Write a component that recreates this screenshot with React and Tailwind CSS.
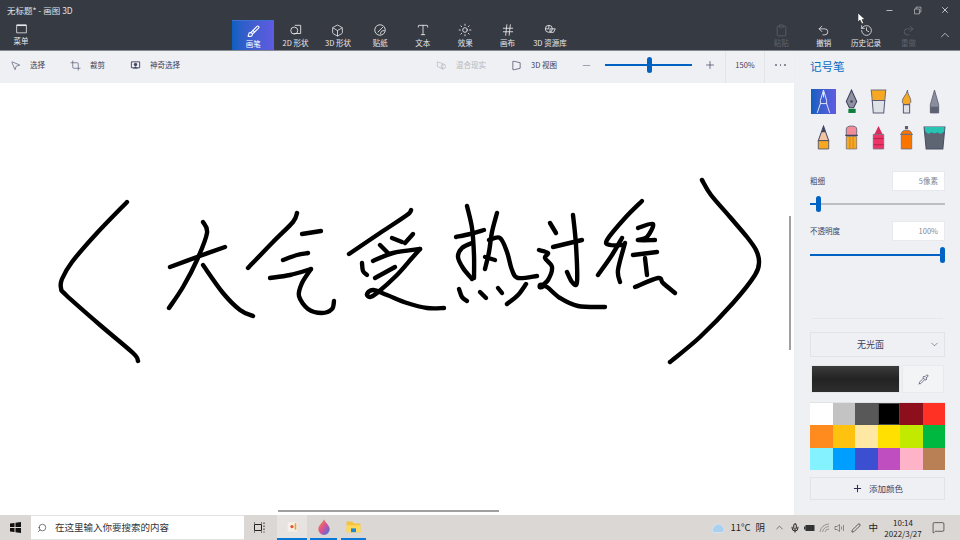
import React from 'react';
import { Brush, Box, Type, Sun, Hash, Undo2, Redo2, History, Clipboard, ChevronUp, ChevronDown, Minus, Plus, X, Crop, MousePointer2, Search, Pipette, Mic, Pen, MessageSquare } from 'lucide-react';

const font = { fontFamily: '"Noto Sans CJK SC", "Noto Sans", sans-serif' };

// handwriting strokes, in screen coordinates
const strokes = [
  [[127,202],[97,233],[72,262],[62,279],[61,288],[66,295],[100,325],[133,353],[138,361]],
  [[203,222],[207,233],[197,260],[183,287],[169,308]],
  [[170,267],[197,257],[225,247]],
  [[203,265],[223,293],[240,310],[253,316]],
  [[297,213],[293,222],[273,242],[248,268]],
  [[302,234],[321,231]],
  [[283,260],[297,255],[308,253]],
  [[270,278],[290,275],[311,269]],
  [[311,269],[302,283],[299,296],[308,309],[322,313],[332,309],[334,301]],
  // 受
  [[411,210],[407,215],[380,233],[349,254]],
  [[392,238],[402,242]],
  [[413,234],[405,243]],
  [[380,245],[388,253]],
  [[373,261],[393,253],[420,249]],
  [[420,249],[412,258],[397,275],[377,293],[370,297],[367,294],[373,290],[387,295],[407,303],[427,308],[444,308]],
  [[362,263],[363,271],[367,275]],
  [[375,278],[395,267]],
  // 热
  [[467,206],[472,228],[474,255],[474,278]],
  [[456,237],[470,234],[484,230]],
  [[472,243],[462,248],[458,257],[463,268],[472,279]],
  [[497,213],[492,232],[489,252],[485,269]],
  [[489,240],[500,238],[507,252],[512,270],[518,278],[537,276]],
  [[485,257],[495,260]],
  [[459,289],[462,297],[467,301]],
  [[480,292],[486,298]],
  [[498,288],[502,293]],
  [[526,284],[518,295],[507,304]],
  // 过
  [[550,223],[556,233]],
  [[573,215],[576,245],[577,282],[572,282],[567,272]],
  [[553,247],[582,240]],
  [[539,250],[548,253],[545,258],[552,267],[548,280],[540,287]],
  [[541,286],[547,287],[560,298],[578,306],[605,307]],
  // 程
  [[642,201],[625,218],[607,240],[610,245],[623,245]],
  [[622,238],[612,255],[598,275]],
  [[625,243],[618,270],[620,282]],
  [[638,228],[653,224],[647,237],[638,240],[655,240]],
  [[633,255],[657,252]],
  [[645,258],[647,275]],
  [[635,287],[658,278],[663,283],[675,293]],
  [[702,180],[711,195],[730,217],[747,237],[756,250],[759,262],[755,275],[733,303],[700,337],[670,362]],
];

function smooth(p) {
  let d = `M${p[0][0]} ${p[0][1]}`;
  for (let i = 0; i < p.length - 1; i++) {
    const a = p[i - 1] || p[i];
    const b = p[i];
    const c = p[i + 1];
    const e = p[i + 2] || c;
    d += ` C${b[0] + (c[0] - a[0]) / 6} ${b[1] + (c[1] - a[1]) / 6} ${c[0] - (e[0] - b[0]) / 6} ${c[1] - (e[1] - b[1]) / 6} ${c[0]} ${c[1]}`;
  }
  return d;
}

function Line({ children, size = 14, cls = '' }) {
  return (
    <svg width={size} height={size} viewBox="0 0 24 24" fill="none" stroke="currentColor" strokeWidth="1.5" className={cls}>
      {children}
    </svg>
  );
}

function RibbonItem({ label, icon, active, faded }) {
  return (
    <div className={`flex flex-col items-center h-[30px] pt-[3px] w-[42.4px] ${active ? 'bg-gradient-to-r from-[#0a5fc0] to-[#5f5be2] text-white border-t border-[#3d6fd0]' : faded ? 'text-[#5f636c]' : 'text-[#e6e7ea]'}`}>
      <div className="h-[14px] flex items-center justify-center">{icon}</div>
      <span className="text-[7.5px] leading-[10px] mt-[1px] whitespace-nowrap">{label}</span>
    </div>
  );
}

function Tool({ icon, label, cls, faded }) {
  return (
    <div className={`flex items-center gap-[9px] ${cls} ${faded ? 'text-[#b4b7bf]' : 'text-[#3c4060]'}`}>
      {icon}
      <span className="text-[7.5px] whitespace-nowrap">{label}</span>
    </div>
  );
}

function Slider({ pct, thumb, width, color = 'bg-[#bdbec2]' }) {
  return (
    <div className="relative h-[16px] flex items-center" style={{ width }}>
      <div className={`h-[1.5px] w-full ${color}`}></div>
      <div className="absolute left-0 h-[1.5px] bg-[#0063c4]" style={{ width: pct }}></div>
      <div className="absolute w-[5px] h-[16px] rounded-[3px] bg-[#0063c4]" style={{ left: thumb }}></div>
    </div>
  );
}

const pens = [
  // marker
  <g key="a" fill="none" stroke="#fff" strokeWidth="0.8"><path d="M12 1 L9 11 V14 L6 23 M12 1 L15 11 V14 L18 23 M9 14 H15 M12 3 V8" /></g>,
  // nib pen
  <g key="b"><path d="M12 1 L17 12 L14 18 H10 L7 12 Z" fill="#8f929e" stroke="#3f4360" strokeWidth="1" /><circle cx="12" cy="12" r="1.2" fill="#3f4360" /><rect x="9" y="19" width="7" height="4" fill="#0f7d3c" /></g>,
  // flat brush
  <g key="c"><path d="M5 1 H19 L18 11 H6 Z" fill="#f7a823" stroke="#70727f" strokeWidth="1" /><path d="M6 11 H18 L17 23 H7 Z" fill="#dfe1e9" stroke="#5a5d75" strokeWidth="1" /></g>,
  // watercolor
  <g key="d"><path d="M13 1 C13 6 17 9 16 13 Q15 15 12 15 Q8 15 8 12 C8 8 12 6 13 1 Z" fill="#f7a823" stroke="#5a5d75" strokeWidth="0.8" /><path d="M9 15 H15 L15 23 H9 Z" fill="#dfe1e9" stroke="#5a5d75" strokeWidth="1" /></g>,
  // calligraphy
  <g key="e"><path d="M12 1 L16 15 V23 H8 V15 Z" fill="#8a8e9c" stroke="#5a5d75" strokeWidth="0.8" /><path d="M8 17 H16 V23 H8 Z" fill="#5d6172" /></g>,
  // pencil
  <g key="f"><path d="M12 1 L17 15 H7 Z" fill="#f3c4a2" stroke="#4a4d68" strokeWidth="1" /><path d="M12 1 L14 7 H10 Z" fill="#3f4360" /><path d="M7 15 H17 V23 H7 Z" fill="#f7a823" stroke="#4a4d68" strokeWidth="0.8" /></g>,
  // eraser pencil
  <g key="g"><path d="M7 4 Q7 1 12 1 Q17 1 17 4 V10 H7 Z" fill="#f28c99" stroke="#5a5d75" strokeWidth="0.8" /><path d="M6 10 H18" stroke="#3f4360" strokeWidth="1.2" /><path d="M7 11 H17 V23 H7 Z" fill="#f7a823" stroke="#5a5d75" strokeWidth="0.6" /><path d="M10.5 11 V23 M13.5 11 V23" stroke="#c77f13" strokeWidth="0.8" /></g>,
  // crayon
  <g key="h"><path d="M12 1 L16 9 H8 Z" fill="#d82c5a" /><path d="M7 9 H17 V23 H7 Z" fill="#ec3466" stroke="#6d7085" strokeWidth="0.8" /><path d="M7 13 H17 M7 19 H17" stroke="#a81f4a" strokeWidth="0.8" /></g>,
  // spray
  <g key="i"><rect x="10.5" y="1" width="3" height="3" fill="#5a5d75" /><path d="M7 9 Q7 5 12 5 Q17 5 17 9 V23 H7 Z" fill="#fa7400" stroke="#6d7085" strokeWidth="0.8" /><path d="M6 9 H18" stroke="#6d7085" strokeWidth="1.2" /></g>,
  // fill bucket
  <g key="j"><path d="M2 2 H22 L20 23 H4 Z" fill="#5e6572" stroke="#4a4d68" strokeWidth="1" /><path d="M2.5 2 H21.5 V6 Q18 10 15 7 Q12 9 9 7 Q6 10 3 6 Z" fill="#27c4b4" /></g>,
];

const palette = ['#ffffff', '#c3c3c3', '#585858', '#000000', '#8d0f1c', '#ff3024', '#ff8a1e', '#ffc20e', '#ffe8a4', '#ffe000', '#c1ea00', '#00b740', '#85f3ff', '#009fff', '#3b4fd0', '#bf4fc0', '#ffb3c9', '#b97f55'];

export default function App() {
  return (
    <div className="w-[960px] h-[540px] flex flex-col overflow-hidden relative bg-white" style={font}>
      {/* top bar */}
      <div className="h-[51px] bg-[#363a43] border-b border-[#85888e] flex flex-col shrink-0">
        <div className="h-[20px] flex items-center justify-between text-[#dfe0e3]">
          <span className="text-[8.5px] ml-[7px] mt-[1px]">无标题* - 画图 3D</span>
          <div className="flex items-center">
            <Minus size={9} className="mr-[19px]" />
            <Line size={9} cls="mr-[18px]"><path d="M4 8 H17 V21 H4 Z M8 8 V3 H21 V16 H17" /></Line>
            <X size={10} className="mr-[10px]" />
          </div>
        </div>
        <div className="flex h-[30px]">
          <div className="flex flex-col items-center w-[42px] -mt-[1px] pt-[3px] text-[#e6e7ea]">
            <Line size={13}><path d="M3 6 H21 V20 H3 Z" /><path d="M3 6 H21" strokeWidth="3" /></Line>
            <span className="text-[7.5px] leading-[10px] mt-[1px]">菜单</span>
          </div>
          <div className="w-[190px]"></div>
          <RibbonItem active label="画笔" icon={<Brush size={13} />} />
          <RibbonItem label="2D 形状" icon={<Line size={14}><circle cx="9" cy="13" r="6" /><path d="M10 4 H20 V18 H8" /></Line>} />
          <RibbonItem label="3D 形状" icon={<Box size={13} strokeWidth={1.5} />} />
          <RibbonItem label="贴纸" icon={<Line size={14}><circle cx="12" cy="12" r="9" /><path d="M8 16 L17 7 M13 19 C13 14 15 13 20 13" /></Line>} />
          <RibbonItem label="文本" icon={<Type size={14} strokeWidth={1.5} />} />
          <RibbonItem label="效果" icon={<Sun size={14} strokeWidth={1.5} />} />
          <RibbonItem label="画布" icon={<Hash size={14} strokeWidth={1.5} />} />
          <RibbonItem label="3D 资源库" icon={<Line size={14}><circle cx="10" cy="10" r="6" /><path d="M12 10 H21 L18 16 H12 Z M10 4 V10 H4" /></Line>} />
          <div className="w-[189px]"></div>
          <RibbonItem faded label="粘贴" icon={<Clipboard size={13} strokeWidth={1.5} />} />
          <RibbonItem label="撤销" icon={<Undo2 size={13} strokeWidth={1.5} />} />
          <RibbonItem label="历史记录" icon={<History size={13} strokeWidth={1.5} />} />
          <RibbonItem faded label="重做" icon={<Redo2 size={13} strokeWidth={1.5} />} />
          <div className="flex-1 flex items-center justify-center text-[#e6e7ea]"><ChevronUp size={14} strokeWidth={1.2} /></div>
        </div>
      </div>

      {/* workspace */}
      <div className="flex flex-1 min-h-0">
        <div className="flex flex-col w-[794px]">
          <div className="h-[32px] bg-[#eef0f3] flex items-center shrink-0 pb-[4px]">
            <Tool cls="ml-[10px]" icon={<MousePointer2 size={11} strokeWidth={1.3} />} label="选择" />
            <Tool cls="ml-[25px]" icon={<Crop size={11} strokeWidth={1.3} />} label="裁剪" />
            <Tool cls="ml-[25px]" icon={<Line size={11}><path d="M3 4 H21 V17 H15 M3 4 V17 H9" strokeWidth="2" /><circle cx="12" cy="10" r="3" fill="currentColor" /><path d="M8 18 Q12 12 16 18 Z" fill="currentColor" /></Line>} label="神奇选择" />
            <Tool faded cls="ml-[256px]" icon={<Line size={11}><path d="M3 4 L15 8 V20 L3 14 Z" /><circle cx="16" cy="14" r="5" /></Line>} label="混合现实" />
            <Tool cls="ml-[25px]" icon={<Line size={11}><path d="M4 3 V21 H8 L20 18 V6 L8 3 Z" /></Line>} label="3D 视图" />
            <Minus size={11} strokeWidth={1} className="ml-[24px] text-[#3c4060]" />
            <div className="ml-[13px]"><Slider width="87px" pct="87px" thumb="42px" color="bg-[#0063c4]" /></div>
            <Plus size={12} strokeWidth={1.4} className="ml-[12px] text-[#3c4060]" />
            <div className="ml-[9px] w-[40px] self-stretch -mb-[4px] border-x border-[#e2e4e7] flex items-center justify-center pb-[4px] text-[7.5px] text-[#3c4060]">150%</div>
            <div className="ml-[10px] flex gap-[3px]">
              <div className="w-[1.5px] h-[1.5px] rounded-full bg-[#6a6d80]"></div>
              <div className="w-[1.5px] h-[1.5px] rounded-full bg-[#6a6d80]"></div>
              <div className="w-[1.5px] h-[1.5px] rounded-full bg-[#6a6d80]"></div>
            </div>
          </div>
          <div className="relative flex-1 bg-white overflow-hidden">
            <svg width="794" height="432" viewBox="0 83 794 432" fill="none" stroke="#000" strokeWidth="4.4" strokeLinecap="round" strokeLinejoin="round" className="absolute inset-0">
              {strokes.map((s, i) => <path key={i} d={smooth(s)} />)}
              <circle cx="541" cy="286" r="3.5" fill="#000" stroke="none" />
            </svg>
            <div className="absolute left-[789px] top-[133px] w-[2px] h-[134px] bg-[#a0a0a0]"></div>
            <div className="absolute left-[278px] bottom-[3px] w-[221px] h-[2px] bg-[#a0a0a0]"></div>
          </div>
        </div>

        {/* side panel */}
        <div className="w-[166px] bg-[#eff0f3] pl-[15px] pr-[15px] flex flex-col shrink-0 border-l border-[#eceef0]">
          <div className="h-[32px] flex items-center text-[#0a6cc4] text-[11.5px] pb-[1px]">记号笔</div>
          <div className="grid grid-cols-5 w-[138px] gap-y-[11px] mt-[6px]">
            {pens.map((p, i) => (
              <div key={i} className="flex justify-center items-center h-[25px]">
                <div className={`w-[25px] h-[25px] flex items-center justify-center ${i === 0 ? 'bg-gradient-to-r from-[#0a5fc0] to-[#5f5be2]' : ''}`}>
                  <svg width="25" height="25" viewBox="0 0 24 24">{p}</svg>
                </div>
              </div>
            ))}
          </div>
          <div className="flex items-center justify-between mt-[21px] h-[20px]">
            <span className="text-[7.5px] text-[#3c4060]">粗细</span>
            <div className="w-[53px] h-[20px] bg-white border border-[#e8e9ec] flex items-center justify-end pr-[6px] text-[7.5px] text-[#85878f]">5像素</div>
          </div>
          <div className="mt-[5px]"><Slider width="135px" pct="7px" thumb="6px" /></div>
          <div className="flex items-center justify-between mt-[9px] h-[20px]">
            <span className="text-[7.5px] text-[#3c4060]">不透明度</span>
            <div className="w-[53px] h-[20px] bg-white border border-[#e8e9ec] flex items-center justify-end pr-[6px] text-[7.5px] text-[#85878f]">100%</div>
          </div>
          <div className="mt-[6px]"><Slider width="135px" pct="135px" thumb="130px" /></div>
          <div className="h-px bg-[#e6e7ea] mt-[55px] mx-[2px]"></div>
          <div className="mt-[13px] h-[25px] border border-[#e2e3e7] relative flex items-center justify-center text-[9px] text-[#3c4060]">
            <span className="mr-[14px]">无光面</span>
            <ChevronDown size={11} strokeWidth={1.2} className="absolute right-[4px] text-[#3c4060]" />
          </div>
          <div className="flex mt-[8px] gap-[2px]">
            <div className="w-[89px] h-[28px] ml-[1px] border border-[#e6e7ea] bg-gradient-to-b from-[#3c3c3c] via-[#232323] to-[#2e2e2e]"></div>
            <div className="w-[42px] h-[28px] bg-[#f3f4f6] border border-[#e8e9ec] flex items-center justify-center text-[#3c4060]"><Pipette size={11} strokeWidth={1.5} /></div>
          </div>
          <div className="grid grid-cols-6 mt-[9px] w-[135px] border-t border-[#e2e3e7]">
            {palette.map((c, i) => (
              <div key={i} className={`h-[22.3px] ${i === 3 ? 'border-[1.5px] border-[#4a4a4a]' : ''}`} style={{ backgroundColor: c }}></div>
            ))}
          </div>
          <div className="mt-[7px] h-[23px] w-[135px] border border-[#e2e3e7] flex items-center justify-center gap-[6px] text-[8.5px] text-[#3c4060]">
            <Plus size={11} strokeWidth={2.2} className="text-[#2c2f55]" />
            <span>添加颜色</span>
          </div>
        </div>
      </div>

      {/* taskbar */}
      <div className="h-[25px] bg-[#dad7d4] flex items-center shrink-0 text-[#222]">
        <div className="w-[31px] flex justify-center">
          <svg width="11" height="11" viewBox="0 0 22 22" fill="#111"><path d="M0 3 L9 2 V10 H0 Z M11 1.5 L22 0 V10 H11 Z M0 12 H9 V20 L0 19 Z M11 12 H22 V22 L11 20.5 Z" /></svg>
        </div>
        <div className="w-[213px] h-[25px] bg-white flex items-center pl-[6px] border-y border-[#e4e2e0]">
          <Search size={10} strokeWidth={1.4} className="-scale-x-100" />
          <span className="ml-[8px] text-[9.5px] text-[#333] whitespace-nowrap">在这里输入你要搜索的内容</span>
        </div>
        <div className="w-[31px] flex justify-center">
          <svg width="11" height="11" viewBox="0 0 22 22" fill="none" stroke="#222" strokeWidth="2"><path d="M1 5 H15 V17 H1 Z M1 1 V3 M15 1 V3 M1 19 V21 M15 19 V21 M20 1 V4 M20 7 V10 M20 13 V16 M20 19 V21" /></svg>
        </div>
        <div className="ml-[2px] w-[30px] h-[25px] bg-[#e6e3e0] border-b-2 border-[#0a78d4] flex items-center justify-center">
          <svg width="13" height="13" viewBox="0 0 24 24"><rect x="3" y="4" width="18" height="17" rx="1" fill="#f4efe9" /><circle cx="11" cy="12" r="3" fill="#e4572e" /><rect x="16" y="6" width="3" height="12" fill="#f0a030" /></svg>
        </div>
        <div className="ml-[3px] w-[27px] h-[25px] border-b-2 border-[#0a78d4] flex items-center justify-center">
          <svg width="14" height="16" viewBox="0 0 24 28"><defs><linearGradient id="drop" x1="0" y1="0" x2="1" y2="1"><stop offset="0" stopColor="#f7941d" /><stop offset="0.5" stopColor="#d94f9a" /><stop offset="1" stopColor="#2a7de1" /></linearGradient></defs><path d="M12 1 C16 8 22 12 22 18 A10 10 0 0 1 2 18 C2 12 8 8 12 1 Z" fill="url(#drop)" /></svg>
        </div>
        <div className="ml-[4px] w-[25px] h-[25px] border-b-2 border-[#0a78d4] flex items-center justify-center">
          <svg width="15" height="13" viewBox="0 0 24 20"><path d="M1 2 H10 L12 5 H23 V19 H1 Z" fill="#f5c33b" /><path d="M1 8 H23 V19 H1 Z" fill="#ffd95e" /><path d="M8 19 V13 H16 V19 Z" fill="#1e88d8" /></svg>
        </div>
        <div className="flex-1"></div>
        <svg width="14" height="10" viewBox="0 0 28 20" className="mr-[5px]"><path d="M6 19 A6 6 0 0 1 6 8 A9 9 0 0 1 22 6 A7 7 0 0 1 22 19 Z" fill="#a9d0ee" stroke="#e9f3fb" strokeWidth="1" /></svg>
        <span className="text-[9.5px] w-[39px] flex gap-[5px] whitespace-nowrap"><span>11°C</span><span>阴</span></span>
        <ChevronUp size={11} strokeWidth={1.2} className="ml-[5px]" />
        <Mic size={10} strokeWidth={2.4} className="ml-[5px]" />
        <svg width="11" height="8" viewBox="0 0 22 16" className="ml-[4px]"><path d="M3 2 H21 V14 H3 Z" fill="#333" /><rect x="0" y="5" width="3" height="6" fill="#333" /></svg>
        <svg width="11" height="10" viewBox="0 0 22 20" fill="none" stroke="#777" strokeWidth="1.4" className="ml-[4px]"><path d="M2 18 A18 18 0 0 1 20 2 M7 18 A13 13 0 0 1 20 7 M12 18 A8 8 0 0 1 20 12" /></svg>
        <svg width="11" height="10" viewBox="0 0 22 20" fill="none" stroke="#666" strokeWidth="1.4" className="ml-[4px]"><path d="M2 7 H6 L11 3 V17 L6 13 H2 Z M15 7 V13 M19 4 V16" /></svg>
        <Pen size={10} strokeWidth={1.6} className="ml-[6px]" />
        <span className="text-[9.5px] ml-[7px]">中</span>
        <div className="w-[44px] ml-[3px] flex flex-col items-center leading-[11px] text-[8px]">
          <span>10:14</span>
          <span>2022/3/27</span>
        </div>
        <MessageSquare size={13} strokeWidth={1.2} className="ml-[7px]" />
        <div className="w-[15px]"></div>
      </div>

      {/* mouse pointer */}
      <svg width="8" height="11" viewBox="0 0 8 11" className="absolute left-[858px] top-[13px]"><path d="M0 0 V9 L2 7 L4 11 L5.5 10 L4 6.5 H7 Z" fill="#fff" stroke="#111" strokeWidth="0.5" /></svg>
    </div>
  );
}
